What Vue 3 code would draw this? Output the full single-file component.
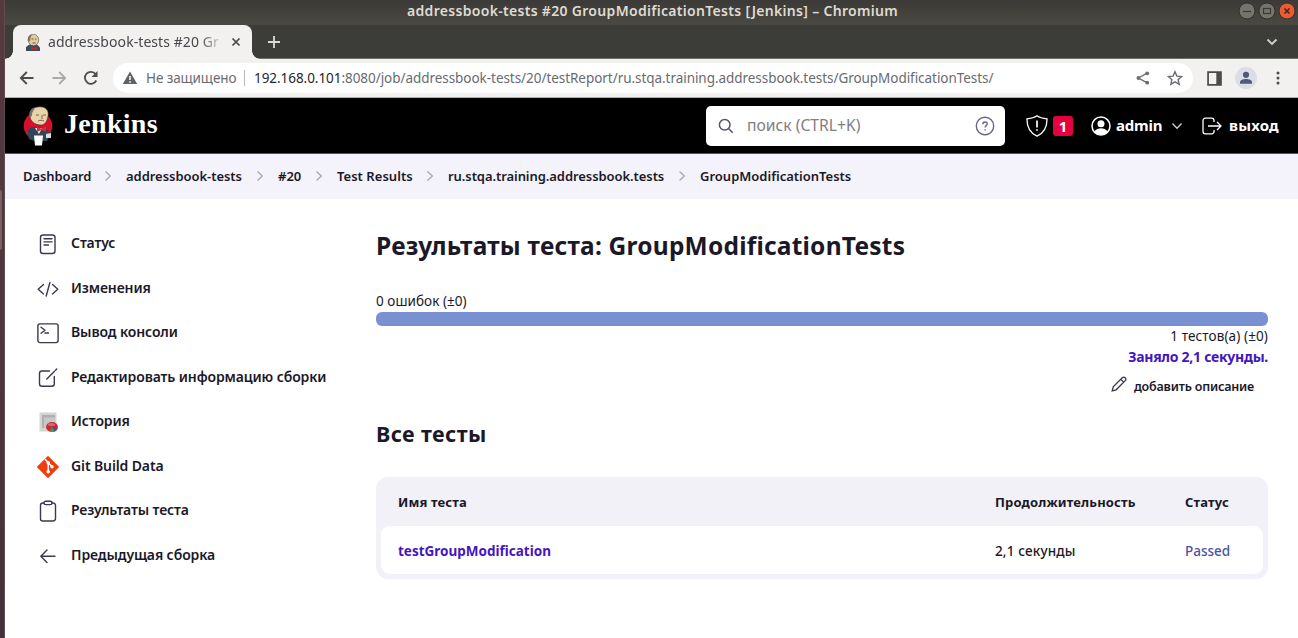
<script setup>
const crumbs = [
  { label: 'Dashboard', cls: 'c1' },
  { label: 'addressbook-tests', cls: 'c2' },
  { label: '#20', cls: 'c3' },
  { label: 'Test Results', cls: 'c4' },
  { label: 'ru.stqa.training.addressbook.tests', cls: 'c5' },
  { label: 'GroupModificationTests', cls: 'c6' },
]
const tasks = [
  { label: 'Статус', icon: 'status' },
  { label: 'Изменения', icon: 'changes' },
  { label: 'Вывод консоли', icon: 'console' },
  { label: 'Редактировать информацию сборки', icon: 'edit' },
  { label: 'История', icon: 'history' },
  { label: 'Git Build Data', icon: 'git' },
  { label: 'Результаты теста', icon: 'clipboard' },
  { label: 'Предыдущая сборка', icon: 'back' },
]
const tests = [{ name: 'testGroupModification', time: '2,1 секунды', status: 'Passed' }]
</script>

<template>
  <div class="screen">
    <div class="edge"><i class="grip"></i></div>
    <div class="window">
      <div class="titlebar">
        <span class="wtitle">addressbook-tests #20 GroupModificationTests [Jenkins] – Chromium</span>
        <div class="wbtns">
          <svg viewBox="0 0 18 18"><circle cx="9" cy="9" r="8" class="wb" /><path d="M5 9.5h8" class="wl" /></svg>
          <svg viewBox="0 0 18 18"><circle cx="9" cy="9" r="8" class="wb" /><rect x="5.5" y="6.5" width="7" height="5" class="wl" /></svg>
          <svg viewBox="0 0 18 18"><circle cx="9" cy="9" r="8" class="wb wx" /><path d="M6.500 6.500l5 5M11.500 6.500l-5 5" class="wl dark" /></svg>
        </div>
      </div>

      <div class="tabs">
        <i class="foot left"></i>
        <div class="tab">
          <svg class="fav" viewBox="0 0 30 34">
            <path d="M1 34v-8l7-5 15 0 6 6v7z" fill="#335061" />
            <ellipse cx="16" cy="12" rx="10.500" ry="11.500" fill="#e3cba0" stroke="#4a3a30" />
            <path d="M5 15C3 6 8 1 13 .5l-3 7-1 7z" fill="#7d7269" />
            <path d="M11 25l6 2 6-2v7l-6-2-6 2z" fill="#d3202c" />
            <path d="M12 10h4M19 10h3M14 18h6" stroke="#4a3a30" stroke-width="1.500" />
          </svg>
          <span class="ttitle">addressbook-tests #20 Gr</span>
          <svg class="tclose" viewBox="0 0 10 10"><path d="M1.500 1.500l7 7M8.500 1.500l-7 7" /></svg>
        </div>
        <i class="foot right"></i>
        <svg class="plus" viewBox="0 0 14 14"><path d="M7 1v12M1 7h12" /></svg>
        <svg class="tabdown" viewBox="0 0 12 8"><path d="M1.500 1.500L6 6l4.500-4.500" /></svg>
      </div>

      <div class="toolbar">
        <svg class="nav" viewBox="0 0 16 16"><path d="M14.500 8H2M7.800 2L1.800 8l6 6" /></svg>
        <svg class="nav fwd" viewBox="0 0 16 16"><path d="M1.500 8H14M8.200 2l6 6-6 6" /></svg>
        <svg class="nav reload" viewBox="0 0 16 16"><path d="M13.300 10.500A6 6 0 1 1 12.600 4" /><path d="M14.500 1v6h-6z" class="solid" /></svg>
        <div class="omni">
          <svg class="warn" viewBox="0 0 16 14"><path d="M8 .6L15.200 13H.8z" fill="#5f6368" /><path d="M8 5v4M8 10.300v1.500" stroke="#fff" stroke-width="1.500" /></svg>
          <span class="insecure">Не защищено</span>
          <i class="sep"></i>
          <span class="url"><b>192.168.0.101</b>:8080/job/addressbook-tests/20/testReport/ru.stqa.training.addressbook.tests/GroupModificationTests/</span>
          <svg class="share" viewBox="0 0 14 14"><path d="M11.200 2.200L2.400 7l8.800 4.800" fill="none" stroke="#6b6d70" stroke-width="1.400" /><g fill="#6b6d70"><circle cx="11.200" cy="2.300" r="1.900" /><circle cx="2.400" cy="7" r="1.900" /><circle cx="11.200" cy="11.700" r="1.900" /></g></svg>
          <svg class="star" viewBox="0 0 16 16"><path d="M8 1.700l1.900 4.400 4.800.4-3.600 3.200 1.100 4.700L8 11.900l-4.200 2.500 1.100-4.700L1.300 6.500l4.800-.4z" /></svg>
        </div>
        <svg class="panel" viewBox="0 0 14 14"><path d="M1 1h12v12H1z" fill="none" stroke="#4a4b4c" stroke-width="1.600" /><path d="M8.700 1h4.500v12H8.700z" fill="#4a4b4c" /></svg>
        <svg class="profile" viewBox="0 0 22 22"><circle cx="11" cy="11" r="11" fill="#dcdee7" /><circle cx="11" cy="7.800" r="3.100" fill="#54597a" /><path d="M5 16.700v-1.500c0-2 3-3.200 6-3.200s6 1.200 6 3.200v1.500z" fill="#54597a" /></svg>
        <svg class="dots" viewBox="0 0 4 14"><circle cx="2" cy="2" r="1.500" /><circle cx="2" cy="7" r="1.500" /><circle cx="2" cy="12" r="1.500" /></svg>
      </div>

      <header class="header">
        <svg class="butler" viewBox="0 0 30 40">
          <circle cx="15" cy="20" r="14.300" fill="#d5102c" />
          <path d="M5 25c0-2 3-4 6-4l10 1c4 1 6 4 6 7l-3 6-13 0-5-2c-1-2-1-5-1-8z" fill="#2f4658" />
          <path d="M12 22l4 6 3-6z" fill="#eee" />
          <path d="M7 10C7 4 11 .8 17 .8s9 4 8 9.200-3 9-7 9C12 19 7 15 7 10z" fill="#e9d3ab" stroke="#4a3a30" stroke-width=".6" />
          <path d="M7 12C5 6 8 2 12 1.500c-1 3-3 4-3 8z" fill="#7b726e" />
          <path d="M13 9h3M20 9h3M15 15c2-1 4-1 6 0M19 9v4" stroke="#6b5542" stroke-width=".9" fill="none" />
          <path d="M14 21l4 1.500 5-2v5l-5-1.500-4 2z" fill="#e02a33" />
          <path d="M11 29.500h9l-1 10h-7z" fill="#fff" />
          <path d="M23 28l5-1v5h-5z" fill="#ddd" />
        </svg>
        <span class="brand">Jenkins</span>
        <div class="search">
          <svg class="mag" viewBox="0 0 16 16"><circle cx="6.700" cy="6.700" r="5.300" /><path d="M10.700 10.700l4 4" /></svg>
          <span class="ph">поиск (CTRL+K)</span>
          <svg class="help" viewBox="0 0 20 20"><circle cx="10" cy="10" r="8.700" /><path d="M7.800 8.200c0-1.300 1-2.200 2.200-2.200s2.200.8 2.200 2c0 1.600-2.100 1.700-2.100 3.500" /><path d="M10.100 13.200v1.300" /></svg>
        </div>
        <svg class="shield" viewBox="0 0 22 22"><path d="M11 .8C8.500 2.600 5 3.500 1 3.800.8 12 4 18 11 21.200c7-3.200 10.200-9.200 10-17.400C17 3.500 13.500 2.600 11 .8z" /><path d="M11 5.500v7M11 14.200v1.600" class="thick" /></svg>
        <span class="badge">1</span>
        <svg class="user" viewBox="0 0 20 20"><circle cx="10" cy="10" r="9" fill="none" stroke="#fff" stroke-width="1.500" /><circle cx="10" cy="7.700" r="3.500" fill="#fff" /><path d="M3.500 15.500c1.500-2.500 4-3.300 6.500-3.300s5 .8 6.500 3.300A8.500 8.500 0 0 1 10 18.800a8.500 8.500 0 0 1-6.500-3.300z" fill="#fff" /></svg>
        <span class="admin">admin</span>
        <svg class="chev" viewBox="0 0 12 8"><path d="M1.500 1.500L6 6.200l4.500-4.700" /></svg>
        <svg class="exit" viewBox="0 0 20 18"><path d="M12 5V3.500a2.300 2.300 0 0 0-2.300-2.300H3.300A2.300 2.300 0 0 0 1 3.500v11a2.300 2.300 0 0 0 2.300 2.300h6.400a2.300 2.300 0 0 0 2.300-2.300V13M6 9h12.700M15 5l4 4-4 4" /></svg>
        <span class="logout">выход</span>
      </header>

      <nav class="crumbs">
        <template v-for="(c, i) in crumbs" :key="c.label">
          <svg v-if="i" class="csep" viewBox="0 0 8 12"><path d="M1.500 1.500L6.300 6l-4.800 4.500" /></svg>
          <span class="crumb" :class="c.cls">{{ c.label }}</span>
        </template>
      </nav>

      <div class="page">
        <aside class="side">
          <div v-for="t in tasks" :key="t.label" class="task">
            <svg viewBox="0 0 22 22" class="ticon">
              <g v-if="t.icon === 'status'"><rect x="3.500" y="2" width="14.500" height="18.500" rx="2.500" /><path d="M7 5.800h8M7 8.900h8M7 12h4.500" /></g>
              <g v-else-if="t.icon === 'changes'"><path d="M6.500 6.500L1.200 11.200l5.300 4.700M15.500 6.500l5.300 4.700-5.300 4.700M12.900 4.500L9.200 18" /></g>
              <g v-else-if="t.icon === 'console'"><rect x=".9" y="1.900" width="20.200" height="18.700" rx="2" /><path d="M4 5.200l4 3-4 3M8 11h3.500" /></g>
              <g v-else-if="t.icon === 'edit'"><path d="M12.500 4H5a2.500 2.500 0 0 0-2.500 2.500v10.300A2.500 2.500 0 0 0 5 19.300h9.800a2.500 2.500 0 0 0 2.500-2.500V9.500M9.800 12L17.500 4.300M18.500 3.200l1.200-1.200" /></g>
              <g v-else-if="t.icon === 'history'" stroke="none">
                <path d="M2.500 1.500h17v19h-17z" fill="#d3d5d3" /><path d="M5 4h13v13H5z" fill="#aeb0ae" /><path d="M7 6.500h11v11H7z" fill="#c7c9c8" />
                <ellipse cx="15" cy="16" rx="5.900" ry="5" fill="#cc2733" /><path d="M15 15.500l5.800 1.500a6 5 0 0 1-3.500 3.700z" fill="#4f4ba8" /><path d="M15 15.500l2.300 5a6 5 0 0 1-4.500 0z" fill="#4f9a3c" /><ellipse cx="14.500" cy="13.500" rx="3.500" ry="1.500" fill="#e4646c" />
              </g>
              <g v-else-if="t.icon === 'git'" stroke="none">
                <path d="M11 .8L21.200 11 11 21.200.8 11z" fill="#f03c0e" stroke="#f03c0e" stroke-linejoin="round" />
                <path d="M8.300 3.500L11.200 6.500V15M11.200 6.800l4 4" stroke="#fff" stroke-width="1.500" fill="none" /><circle cx="11.200" cy="6.700" r="1.700" fill="#fff" /><circle cx="15" cy="10.800" r="1.700" fill="#fff" /><circle cx="11.200" cy="15.700" r="1.800" fill="#fff" />
              </g>
              <g v-else-if="t.icon === 'clipboard'"><path d="M7 3H5.800a2.300 2.300 0 0 0-2.300 2.300v13.400A2.300 2.300 0 0 0 5.800 21h10.400a2.300 2.300 0 0 0 2.300-2.300V5.300A2.300 2.300 0 0 0 16.200 3H15" /><rect x="7" y="1.200" width="8" height="3.400" rx="1.600" /></g>
              <g v-else><path d="M18 11.200H4M10 5l-6.200 6.200 6.200 6.200" /></g>
            </svg>
            <span>{{ t.label }}</span>
          </div>
        </aside>

        <main class="main">
          <h1>Результаты теста: GroupModificationTests</h1>
          <div class="fails">0 ошибок (±0)</div>
          <div class="bar"></div>
          <div class="total">1 тестов(а) (±0)</div>
          <div class="took">Заняло 2,1 секунды.</div>
          <div class="adddesc">
            <svg viewBox="0 0 16 16"><path d="M1.200 14.800l1-4L11.300 1.700a1.900 1.900 0 0 1 2.900 2.900L5.200 13.800zM9.800 3.200l2.900 2.900" /></svg>
            <span>добавить описание</span>
          </div>
          <h2>Все тесты</h2>
          <div class="table">
            <div class="row head"><span>Имя теста</span><span>Продолжительность</span><span>Статус</span></div>
            <div v-for="r in tests" :key="r.name" class="row body">
              <span class="name">{{ r.name }}</span><span class="time">{{ r.time }}</span><span class="passed">{{ r.status }}</span>
            </div>
          </div>
        </main>
      </div>
    </div>
  </div>
</template>

<style>
body { margin: 0; overflow: hidden; }
</style>

<style scoped>
* { box-sizing: border-box; }
.screen { width: 1298px; height: 638px; display: flex; overflow: hidden; background: #fff; font-family: "Noto Sans", "Open Sans", sans-serif; color: #1b1828; white-space: nowrap; }
svg { display: block; flex: none; }
.edge { width: 5px; flex: none; background: linear-gradient(#57393f, #4f353d 50%, #43303a); border-right: 1px solid #5f4b50; padding-top: 190px; }
.grip { display: block; width: 2px; height: 60px; background: #776064; border-radius: 0 2px 2px 0; }
.window { width: 1293px; flex: none; }

.titlebar { height: 25px; background: linear-gradient(#3b3a36, #4b4943); display: flex; align-items: center; padding-left: 402px; }
.wtitle { width: 492px; font-size: 14px; font-weight: 600; letter-spacing: 0.31px; line-height: 20px; color: #dfdbd2; margin-top: -3px; }
.wbtns { display: flex; gap: 2px; margin-left: 339px; margin-top: -3px; }
.wbtns svg { width: 18px; height: 18px; }
.wb { fill: #75746c; stroke: #32312e; }
.wx { fill: #e95c33; }
.wl { fill: none; stroke: #3a3935; stroke-width: 1.2; }
.dark { stroke: #43251b; stroke-width: 1.5; }

.tabs { height: 34px; background: #3c3d38; display: flex; align-items: flex-end; border-bottom: 1px solid #70706b; }
.tab { width: 239px; height: 34px; margin-bottom: -1px; background: #f2f1ef; border-radius: 8px 8px 0 0; display: flex; align-items: center; padding-left: 12px; }
.foot { width: 8px; height: 8px; margin-bottom: -1px; }
.foot.left { background: radial-gradient(circle at 0 0, transparent 7.5px, #f2f1ef 8px); }
.foot.right { background: radial-gradient(circle at 100% 0, transparent 7.5px, #f2f1ef 8px); }
.fav { width: 16px; height: 17px; }
.ttitle { width: 174px; margin: -2px 0 0 7px; font-size: 14px; letter-spacing: 0.07px; color: #45474a; overflow: hidden; -webkit-mask-image: linear-gradient(90deg, #000 152px, transparent 176px); }
.tclose { width: 10px; height: 10px; margin-left: 9px; fill: none; stroke: #45474a; stroke-width: 1.7; }
.plus { width: 14px; height: 14px; margin: 0 0 9px 7px; fill: none; stroke: #dcdad5; stroke-width: 1.8; }
.tabdown { width: 12px; height: 8px; margin: 0 0 12px 985px; fill: none; stroke: #d5d3ce; stroke-width: 1.8; }

.toolbar { height: 39px; background: #f2f1ef; border-bottom: 1px solid #b0b0ae; display: flex; align-items: center; padding-left: 14px; }
.nav { width: 16px; height: 16px; fill: none; stroke: #4b4c4e; stroke-width: 1.8; }
.fwd { margin-left: 16px; stroke: #a9a9a8; }
.reload { margin-left: 16px; }
.nav .solid { fill: #4b4c4e; stroke: none; }
.omni { width: 1080px; height: 30px; margin-left: 14px; background: #fff; border-radius: 15px; display: flex; align-items: center; padding-left: 9px; font-size: 13.5px; color: #696b6f; }
.warn { width: 16px; height: 14px; }
.insecure { width: 91px; margin-left: 8px; letter-spacing: -0.1px; }
.sep { width: 1px; height: 16px; margin: 0 9px 0 7px; background: #b6b7b9; }
.url { width: 876px; letter-spacing: -0.05px; }
.url b { font-weight: 400; color: #26282b; }
.share { width: 14px; height: 14px; margin-left: 6px; }
.star { width: 16px; height: 16px; margin-left: 17px; fill: none; stroke: #6b6d70; stroke-width: 1.4; }
.panel { width: 15px; height: 15px; margin-left: 14px; }
.profile { width: 22px; height: 22px; margin-left: 13px; }
.dots { width: 4px; height: 14px; margin-left: 19px; fill: #4b4c4e; }

.header { height: 56px; background: #000; border-bottom: 1px solid #55545a; display: flex; align-items: center; padding-left: 18px; color: #fff; }
.butler { width: 30px; height: 40px; }
.brand { width: 100px; margin: -4px 1px 0 11px; font-family: "Liberation Serif", serif; font-weight: 700; font-size: 28px; letter-spacing: 0.3px; line-height: 36px; }
.search { width: 299px; height: 40px; margin-left: 541px; background: #fff; border-radius: 5px; display: flex; align-items: center; padding-left: 12px; }
.mag { width: 16px; height: 16px; fill: none; stroke: #55516c; stroke-width: 1.5; }
.ph { width: 217px; margin: -2px 0 0 13px; font-size: 15.7px; color: #808083; }
.help { width: 20px; height: 20px; margin-left: 11px; fill: none; stroke: #6a6488; stroke-width: 1.4; }
.shield { width: 22px; height: 22px; margin-left: 21px; fill: none; stroke: #fff; stroke-width: 1.3; }
.thick { stroke-width: 1.7; }
.badge { width: 20px; height: 20px; margin-left: 5px; border-radius: 3px; background: #e6003d; font-size: 15px; font-weight: 700; line-height: 20px; text-align: center; }
.user { width: 20px; height: 20px; margin-left: 18px; }
.admin { width: 47px; margin: -1px 0 0 5px; font-size: 15px; font-weight: 700; letter-spacing: -0.2px; }
.chev { width: 12px; height: 8px; margin-left: 8px; fill: none; stroke: #d0d0d0; stroke-width: 1.3; }
.exit { width: 20px; height: 18px; margin-left: 19px; fill: none; stroke: #fff; stroke-width: 1.3; }
.logout { margin: -1px 0 0 7px; font-size: 15px; font-weight: 700; letter-spacing: 0.2px; }

.crumbs { height: 45px; background: #f4f2fa; display: flex; align-items: center; padding: 0 0 1px 18px; font-size: 13px; font-weight: 600; }
.csep { width: 8px; height: 12px; margin: 0 14px; fill: none; stroke: #a9a6bb; stroke-width: 1.3; }
.c1 { width: 67px; letter-spacing: -0.08px; }
.c2 { width: 116px; letter-spacing: -0.04px; }
.c3 { width: 23px; }
.c4 { width: 75px; letter-spacing: 0.04px; }
.c5 { width: 216px; letter-spacing: -0.07px; }

.page { display: flex; }
.side { width: 371px; flex: none; padding: 23px 0 0 32px; }
.task { height: 44.5px; display: flex; align-items: center; font-size: 14px; font-weight: 600; letter-spacing: -0.12px; line-height: 20px; }
.task span { margin: -2px 0 0 12px; }
.ticon { width: 22px; height: 22px; fill: none; stroke: #3b394b; stroke-width: 1.4; stroke-linecap: round; stroke-linejoin: round; }
.main { width: 892px; }
h1 { margin: 29px 0 0; height: 36px; font-size: 24.5px; font-weight: 700; letter-spacing: 0.22px; line-height: 36px; }
.fails { margin-top: 27px; height: 21px; font-size: 13.5px; letter-spacing: 0.05px; line-height: 20px; }
.bar { height: 14px; border-radius: 6px; background: #7991d1; }
.total { height: 21px; font-size: 13.5px; letter-spacing: 0.12px; line-height: 20px; text-align: right; }
.took { height: 21px; font-size: 14px; font-weight: 700; letter-spacing: -0.27px; line-height: 20px; text-align: right; color: #4516bd; }
.adddesc { height: 34px; display: flex; align-items: center; justify-content: flex-end; padding: 3px 14px 0 0; font-size: 12.5px; font-weight: 600; letter-spacing: -0.18px; }
.adddesc svg { width: 16px; height: 16px; margin: -5px 7px 0 0; fill: none; stroke: #3b394b; stroke-width: 1.3; }
h2 { margin: 15px 0 0; height: 34px; font-size: 21.5px; font-weight: 700; letter-spacing: 0.4px; line-height: 34px; }
.table { margin-top: 26px; height: 102px; padding: 0 5px 5px; border-radius: 12px; background: #f3f1f8; }
.row { display: grid; grid-template-columns: 597px 190px 1fr; align-items: center; padding-left: 17px; }
.head { height: 49px; font-size: 13px; font-weight: 700; letter-spacing: 0.15px; }
.body { height: 48px; padding-top: 1px; background: #fff; border-radius: 9px; font-size: 13.5px; font-weight: 500; letter-spacing: 0.15px; }
.name { font-weight: 700; letter-spacing: 0; color: #4516bd; }
.passed { letter-spacing: 0; color: #4a52a3; }
</style>
